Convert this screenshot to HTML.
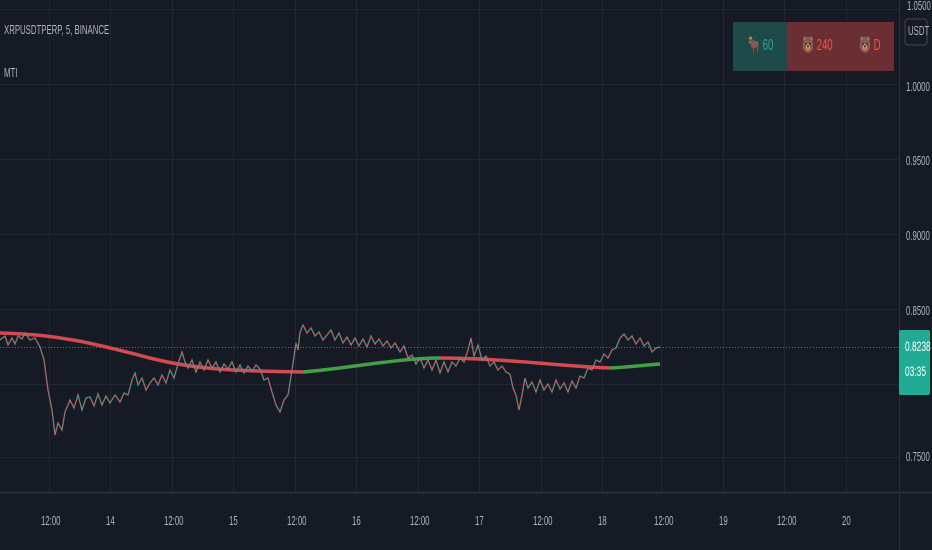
<!DOCTYPE html>
<html><head><meta charset="utf-8"><style>
html,body{margin:0;padding:0;background:#161a25;width:932px;height:550px;overflow:hidden;font-family:"Liberation Sans",sans-serif}
.t{position:absolute;color:#b2b5be;font-size:13px;transform:scaleX(.6);transform-origin:left center;white-space:nowrap}
</style></head><body>
<svg width="932" height="550" style="position:absolute;left:0;top:0">
<defs>
<polyline id="p" points="0,340 5,336 8,345 12,338 15,344 18,336 22,339 25,333 30,340 35,338 40,347 44,360 48,390 52,410 55,435 58,423 62,430 65,412 70,400 74,408 78,395 82,410 86,398 90,397 94,406 98,394 102,405 106,396 110,403 115,395 120,402 124,393 128,395 132,380 135,373 138,385 142,378 146,390 150,383 154,378 158,385 162,375 166,383 170,370 174,378 178,364 182,352 185,362 188,368 192,360 196,372 200,362 204,370 208,360 212,368 216,362 220,372 224,364 228,369 232,362 236,372 240,365 244,373 248,366 252,371 256,365 260,369 264,380 268,378 272,392 276,405 280,412 284,400 288,395 292,370 296,343 298,350 300,332 303,325 307,333 311,328 315,336 319,332 323,340 327,335 331,330 335,340 339,333 343,343 347,337 351,345 355,338 359,346 363,339 367,347 371,336 375,344 379,339 383,346 387,341 391,348 395,343 400,352 404,346 408,358 412,355 416,364 420,358 424,368 428,360 432,370 436,360 440,373 444,362 448,372 452,362 456,366 460,358 464,362 468,350 471,338 474,356 478,345 482,360 486,356 490,366 494,362 498,370 502,366 506,372 510,374 513,388 516,395 519,410 522,395 525,378 528,388 532,382 536,392 540,380 544,390 548,384 552,392 556,380 560,389 564,383 568,392 572,381 576,388 580,376 584,378 588,368 592,370 596,360 600,362 604,354 608,358 612,350 616,348 620,338 624,334 628,340 632,336 636,344 640,338 644,346 648,342 652,352 656,348 660,347"/>
</defs>
<rect width="932" height="550" fill="#161a25"/>
<g stroke="#232733" stroke-width="1">
<line x1="0" y1="9.5" x2="899" y2="9.5"/><line x1="0" y1="84.5" x2="899" y2="84.5"/><line x1="0" y1="159.5" x2="899" y2="159.5"/><line x1="0" y1="234.5" x2="899" y2="234.5"/><line x1="0" y1="309.5" x2="899" y2="309.5"/><line x1="0" y1="384.5" x2="899" y2="384.5"/><line x1="0" y1="457.5" x2="899" y2="457.5"/>
<line x1="49.5" y1="0" x2="49.5" y2="492"/><line x1="110.5" y1="0" x2="110.5" y2="492"/><line x1="172.5" y1="0" x2="172.5" y2="492"/><line x1="233.5" y1="0" x2="233.5" y2="492"/><line x1="295.5" y1="0" x2="295.5" y2="492"/><line x1="356.5" y1="0" x2="356.5" y2="492"/><line x1="418.5" y1="0" x2="418.5" y2="492"/><line x1="479.5" y1="0" x2="479.5" y2="492"/><line x1="541.5" y1="0" x2="541.5" y2="492"/><line x1="602.5" y1="0" x2="602.5" y2="492"/><line x1="661.5" y1="0" x2="661.5" y2="492"/><line x1="723.5" y1="0" x2="723.5" y2="492"/><line x1="784.5" y1="0" x2="784.5" y2="492"/><line x1="846.5" y1="0" x2="846.5" y2="492"/>
</g>
<line x1="899.5" y1="0" x2="899.5" y2="550" stroke="#2a2e39"/>
<line x1="0" y1="492.5" x2="932" y2="492.5" stroke="#2a2e39" stroke-width="2"/>
<line x1="0" y1="347.5" x2="899" y2="347.5" stroke="#26a69a" stroke-dasharray="1 2" opacity=".8"/>
<path d="M0,333 C60,334 100,345 150,358 S250,371 303,372" fill="none" stroke="#d44a52" stroke-width="3.5"/>
<path d="M303,372 C350,368 400,358 440,358" fill="none" stroke="#43a047" stroke-width="3.5"/>
<path d="M440,358 C500,358 560,366 610,368" fill="none" stroke="#d44a52" stroke-width="3.5"/>
<path d="M610,368 C630,367 645,365 660,364" fill="none" stroke="#43a047" stroke-width="3.5"/>
<use href="#p" fill="none" stroke="#26a69a" stroke-width="1.3" stroke-dasharray="3 3"/>
<use href="#p" fill="none" stroke="#ef5350" stroke-width="1.3" stroke-dasharray="3 3" stroke-dashoffset="3"/>
<rect x="733" y="22" width="54" height="49" fill="#1e4b4a"/>
<rect x="787" y="22" width="107" height="49" fill="#6b2e33"/>
<rect x="899" y="330" width="31" height="65" rx="2" fill="#22ab94"/>
<rect x="905" y="19" width="22" height="26" rx="3" fill="none" stroke="#434651"/>
</svg>
<div class="t" style="left:4px;top:22px">XRPUSDTPERP, 5, BINANCE</div>
<div class="t" style="left:4px;top:65px">MTI</div>
<div class="t" style="left:748px;top:35px;font-size:16px;color:#26a69a"><span style="color:#a0582a">🐂</span> 60</div>
<div class="t" style="left:802px;top:35px;font-size:16px;color:#ef5350"><span style="color:#a0582a">🐻</span> 240</div>
<div class="t" style="left:859px;top:35px;font-size:16px;color:#ef5350"><span style="color:#a0582a">🐻</span> D</div>
<div class="t" style="left:907px;top:-2px">1.0500</div>
<div class="t" style="left:908px;top:23px">USDT</div>
<div class="t" style="left:906px;top:79px">1.0000</div>
<div class="t" style="left:906px;top:153px">0.9500</div>
<div class="t" style="left:906px;top:228px">0.9000</div>
<div class="t" style="left:906px;top:303px">0.8500</div>
<div class="t" style="left:905px;top:338px;color:#fff;font-size:14px">0.8238</div>
<div class="t" style="left:905px;top:363px;color:#fff;font-size:14px">03:35</div>
<div class="t" style="left:906px;top:449px">0.7500</div>
<div class="t" style="left:41px;top:513px">12:00</div>
<div class="t" style="left:106px;top:513px">14</div>
<div class="t" style="left:164px;top:513px">12:00</div>
<div class="t" style="left:229px;top:513px">15</div>
<div class="t" style="left:287px;top:513px">12:00</div>
<div class="t" style="left:352px;top:513px">16</div>
<div class="t" style="left:410px;top:513px">12:00</div>
<div class="t" style="left:475px;top:513px">17</div>
<div class="t" style="left:533px;top:513px">12:00</div>
<div class="t" style="left:598px;top:513px">18</div>
<div class="t" style="left:654px;top:513px">12:00</div>
<div class="t" style="left:719px;top:513px">19</div>
<div class="t" style="left:777px;top:513px">12:00</div>
<div class="t" style="left:842px;top:513px">20</div>
</body></html>
